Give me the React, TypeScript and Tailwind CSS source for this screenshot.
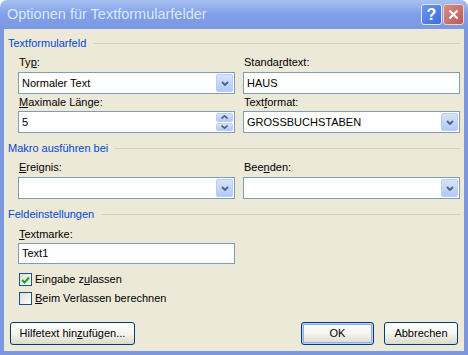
import React from "react";

const F = { fontFamily: '"Liberation Sans", Arial, sans-serif' };

function U({ children }: { children: React.ReactNode }) {
  return <span className="underline underline-offset-[1px]">{children}</span>;
}

function Chevron() {
  return (
    <svg width="8" height="5" viewBox="0 0 8 5">
      <path d="M1 1 L4 4 L7 1" stroke="#4d6185" strokeWidth="1.8" fill="none" />
    </svg>
  );
}

function DropBtn() {
  return (
    <div className="w-[17px] h-full flex items-center justify-center rounded-[2px] border border-[#b9cdf5] bg-gradient-to-b from-[#d6e3fd] to-[#b3c8f6]">
      <Chevron />
    </div>
  );
}

function Select({ value }: { value?: string }) {
  return (
    <div className="h-[22px] w-[217px] border border-[#7f9db9] bg-white flex items-stretch p-[1px]">
      <div className="flex-1 flex items-center pl-[2px] text-[11px] text-black">{value}</div>
      <DropBtn />
    </div>
  );
}

function Input({ value, w = "w-[217px]", h = "h-[22px]" }: { value?: string; w?: string; h?: string }) {
  return (
    <div className={`${h} ${w} border border-[#7f9db9] bg-white flex items-center pl-[3px] text-[11px] text-black`}>
      {value}
    </div>
  );
}

function Spin() {
  return (
    <div className="h-[22px] w-[217px] border border-[#7f9db9] bg-white flex items-stretch p-[1px]">
      <div className="flex-1 flex items-center pl-[2px] text-[11px] text-black">5</div>
      <div className="w-[17px] flex flex-col gap-[1px]">
        <div className="flex-1 flex items-center justify-center rounded-[2px] border border-[#b9cdf5] bg-gradient-to-b from-[#d6e3fd] to-[#b3c8f6]">
          <svg width="7" height="4" viewBox="0 0 7 4">
            <path d="M0.5 3.5 L3.5 0.8 L6.5 3.5" stroke="#4d6185" strokeWidth="1.6" fill="none" />
          </svg>
        </div>
        <div className="flex-1 flex items-center justify-center rounded-[2px] border border-[#b9cdf5] bg-gradient-to-b from-[#d6e3fd] to-[#b3c8f6]">
          <svg width="7" height="4" viewBox="0 0 7 4">
            <path d="M0.5 0.5 L3.5 3.2 L6.5 0.5" stroke="#4d6185" strokeWidth="1.6" fill="none" />
          </svg>
        </div>
      </div>
    </div>
  );
}

function Header({ children }: { children: React.ReactNode }) {
  return (
    <div className="h-[13px] flex items-center gap-[7px] pr-[4px]">
      <span className="text-[11px] leading-[13px] text-[#0046d5] whitespace-nowrap">{children}</span>
      <div className="flex-1 h-[1px] bg-[#d0d0bf]" />
    </div>
  );
}

function Label({ children }: { children: React.ReactNode }) {
  return <div className="h-[13px] text-[11px] leading-[13px] text-black pl-[1px]">{children}</div>;
}

function Check({ checked, children }: { checked?: boolean; children: React.ReactNode }) {
  return (
    <div className="flex items-center gap-[3px] h-[13px]">
      <div className="w-[13px] h-[13px] border border-[#1c5180] bg-gradient-to-br from-[#dcdcd7] to-white flex items-center justify-center">
        {checked && (
          <svg width="9" height="8" viewBox="0 0 9 8">
            <path d="M1 4 L3.5 6.5 L8 1.5" stroke="#21a121" strokeWidth="2" fill="none" />
          </svg>
        )}
      </div>
      <span className="text-[11px] leading-[13px] text-black">{children}</span>
    </div>
  );
}

function Btn({ children, w, def }: { children: React.ReactNode; w: string; def?: boolean }) {
  return (
    <div
      className={`${w} h-[23px] rounded-[3px] border border-[#003c74] flex items-center justify-center text-[11px] text-black bg-gradient-to-b from-white via-[#f5f4ee] to-[#dcd9cc] ${
        def ? "shadow-[inset_0_0_0_1px_#b9d1f9,inset_0_0_0_2px_#8ab0f0]" : ""
      }`}
    >
      {children}
    </div>
  );
}

export default function App() {
  return (
    <div style={F} className="w-[468px] h-[355px] bg-white flex flex-col">
      {/* Title bar */}
      <div className="h-[29px] rounded-t-[7px] bg-gradient-to-b from-[#a8c1f0] via-[#809fe8] to-[#7b99e2] flex items-center pl-[7px] pr-[4px]">
        <span className="flex-1 text-[14.5px] text-[#dde7fa] whitespace-nowrap pt-[1px]">
          Optionen für Textformularfelder
        </span>
        <div className="flex gap-[1px]">
          <div className="w-[21px] h-[21px] rounded-[3px] border border-[#dfe8fb] bg-gradient-to-br from-[#6b97f0] to-[#3e6cdc] flex items-center justify-center text-white text-[16px] font-bold leading-none">
            ?
          </div>
          <div className="w-[21px] h-[21px] rounded-[3px] border border-[#ead2d0] bg-gradient-to-br from-[#d98b84] to-[#bd5a55] flex items-center justify-center">
            <svg width="11" height="11" viewBox="0 0 11 11">
              <path d="M1.5 1.5 L9.5 9.5 M9.5 1.5 L1.5 9.5" stroke="white" strokeWidth="2.2" />
            </svg>
          </div>
        </div>
      </div>
      {/* Body */}
      <div className="flex-1 border-x-4 border-b-4 border-[#7b97e0] bg-[#ece9d8] flex flex-col pl-[4px] pt-[8px]">
        <Header>Textformularfeld</Header>
        <div className="flex gap-[8px] pl-[10px] mt-[6px]">
          <div className="flex flex-col">
            <Label>
              Ty<U>p</U>:
            </Label>
            <div className="mt-[3px]">
              <Select value="Normaler Text" />
            </div>
            <div className="mt-[2px]">
              <Label>
                <U>M</U>aximale Länge:
              </Label>
            </div>
            <div className="mt-[2px]">
              <Spin />
            </div>
          </div>
          <div className="flex flex-col">
            <Label>
              Standa<U>r</U>dtext:
            </Label>
            <div className="mt-[3px]">
              <Input value="HAUS" />
            </div>
            <div className="mt-[2px]">
              <Label>
                Text<U>f</U>ormat:
              </Label>
            </div>
            <div className="mt-[2px]">
              <Select value="GROSSBUCHSTABEN" />
            </div>
          </div>
        </div>
        <div className="mt-[9px]">
          <Header>Makro ausführen bei</Header>
        </div>
        <div className="flex gap-[8px] pl-[10px] mt-[6px]">
          <div className="flex flex-col">
            <Label>
              <U>E</U>reignis:
            </Label>
            <div className="mt-[3px]">
              <Select />
            </div>
          </div>
          <div className="flex flex-col">
            <Label>
              Bee<U>n</U>den:
            </Label>
            <div className="mt-[3px]">
              <Select />
            </div>
          </div>
        </div>
        <div className="mt-[9px]">
          <Header>Feldeinstellungen</Header>
        </div>
        <div className="flex flex-col pl-[10px] mt-[7px]">
          <Label>
            <U>T</U>extmarke:
          </Label>
          <div className="mt-[2px]">
            <Input value="Text1" h="h-[21px]" />
          </div>
          <div className="mt-[9px] pl-[1px]">
            <Check checked>
              Eingabe z<U>u</U>lassen
            </Check>
          </div>
          <div className="mt-[6px] pl-[1px]">
            <Check>
              <U>B</U>eim Verlassen berechnen
            </Check>
          </div>
        </div>
        <div className="flex items-center mt-[17px] pl-[2px] pr-[6px]">
          <Btn w="w-[125px]">
            Hilfetext hin<U>z</U>ufügen...
          </Btn>
          <div className="flex-1" />
          <Btn w="w-[73px]" def>
            OK
          </Btn>
          <div className="w-[10px]" />
          <Btn w="w-[74px]">Abbrechen</Btn>
        </div>
      </div>
    </div>
  );
}
